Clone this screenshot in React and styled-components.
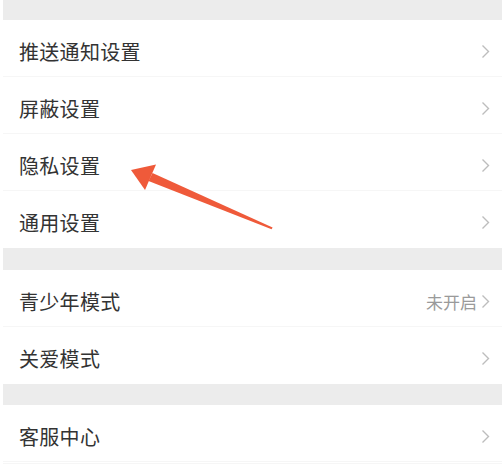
import React from "react";
import styled, { createGlobalStyle } from "styled-components";

const GlobalStyle = createGlobalStyle`
    body {
        margin: 0;
        background: #fff;
        font-family: "Noto Sans CJK SC", "Noto Sans", sans-serif;
    }
`;

const Page = styled.div`
    position: relative;
    width: 504px;
    height: 475px;
    padding: 0 2px 0 3px;
    box-sizing: border-box;
    overflow: hidden;
`;

const Gap = styled.div`
    height: ${(props) => props.h}px;
    background: #ececec;
`;

const Row = styled.div`
    height: 57px;
    box-sizing: border-box;
    display: flex;
    align-items: center;
    padding: 6px 12px 0 16px;
    background: #fff;
    border-bottom: 1px solid ${(props) => (props.last ? "#fff" : "#f6f6f6")};
`;

const Label = styled.span`
    flex: 1;
    font-size: 20px;
    color: #333;
    letter-spacing: 0.3px;
`;

const Value = styled.span`
    font-size: 17px;
    color: #9a9a9a;
    margin-right: 4px;
`;

const Footer = styled.div`
    border-top: 1px solid #f6f6f6;
    margin-top: 1px;
`;

const Arrow = styled.svg`
    position: absolute;
    left: 0;
    top: 0;
    pointer-events: none;
`;

const Chevron = () => (
    <svg width="9" height="15" viewBox="0 0 9 15">
        <polyline points="1.5,1.5 7.5,7.5 1.5,13.5" fill="none" stroke="#bdbdbd" strokeWidth="1.4" />
    </svg>
);

const Item = ({ label, value, last }) => (
    <Row last={last}>
        <Label>{label}</Label>
        {value && <Value>{value}</Value>}
        <Chevron />
    </Row>
);

const App = () => {
    return (
        <Page>
            <GlobalStyle />
            <Gap h={20} />
            <Item label="推送通知设置" />
            <Item label="屏蔽设置" />
            <Item label="隐私设置" />
            <Item label="通用设置" last />
            <Gap h={22} />
            <Item label="青少年模式" value="未开启" />
            <Item label="关爱模式" last />
            <Gap h={21} />
            <Item label="客服中心" />
            <Footer />
            <Arrow width="504" height="475">
                <polygon points="131,170 156,164.5 145,190" fill="#ef5a3a" />
                <polygon points="148.5,181 152.5,173 272.6,227.4 271.6,229.2" fill="#ef5a3a" />
            </Arrow>
        </Page>
    );
};

export default App;
